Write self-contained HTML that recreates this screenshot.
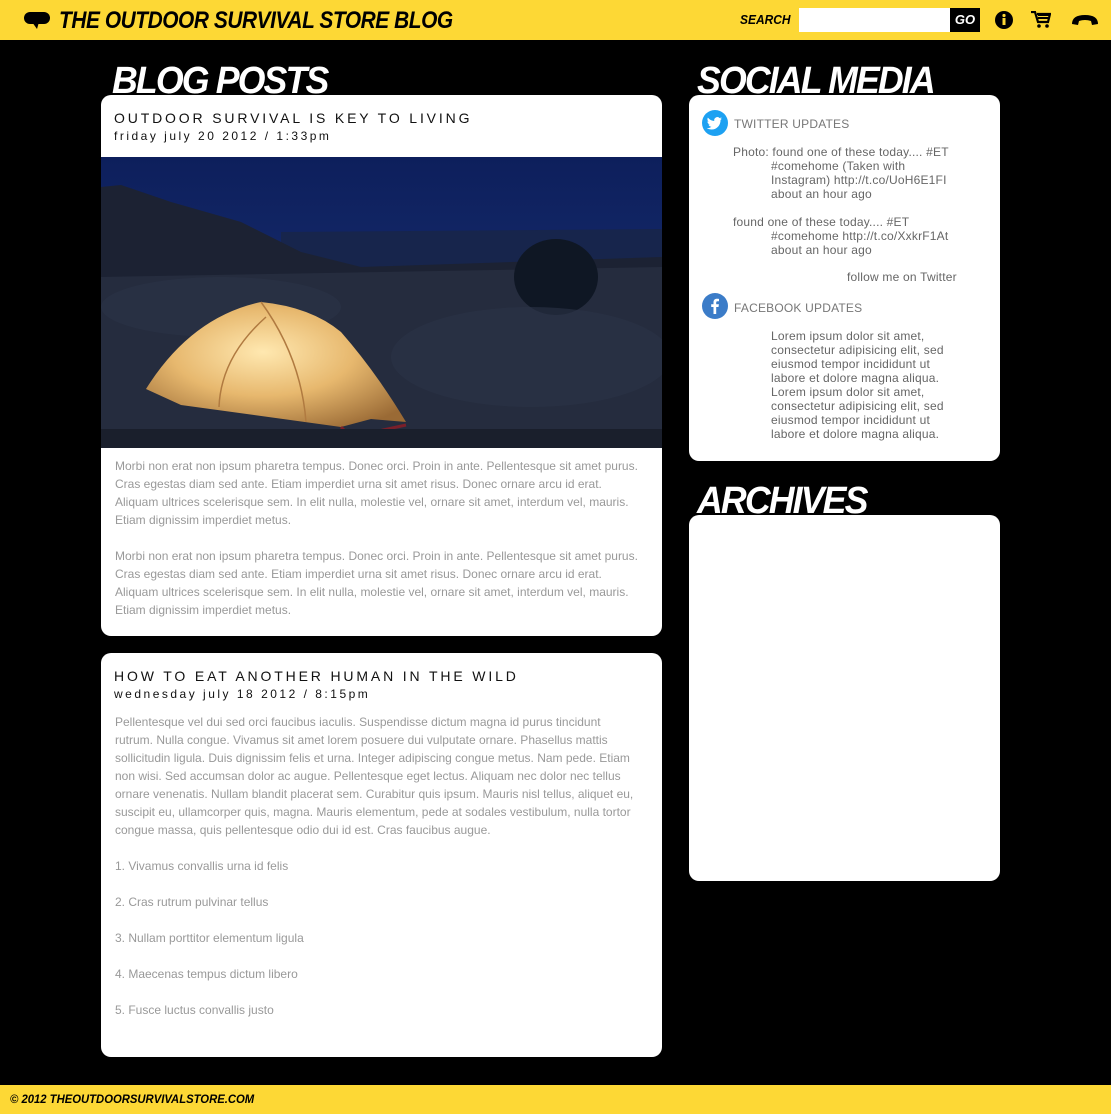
<!DOCTYPE html>
<html><head><meta charset="utf-8"><style>
*{margin:0;padding:0;box-sizing:border-box}
body{width:1111px;height:1114px;background:#000;position:relative;overflow:hidden;font-family:"Liberation Sans",sans-serif}
.hdr{position:absolute;left:0;top:0;width:1111px;height:40px;background:#fdd835}
.ftr{position:absolute;left:0;top:1085px;width:1111px;height:29px;background:#fdd835}
.brand{position:absolute;left:59px;top:7px;font-size:24px;font-weight:bold;font-style:italic;letter-spacing:-0.5px;color:#000;transform:scaleX(0.87);transform-origin:left}
.h{position:absolute;color:#fff;font-weight:bold;font-style:italic;font-size:38px;letter-spacing:-2px;z-index:1;transform:scaleX(0.94);transform-origin:left}
.box{position:absolute;background:#fff;border-radius:10px;z-index:2;overflow:hidden}
.t{position:absolute;left:13px;font-size:14px;letter-spacing:2.85px;color:#111}
.d{position:absolute;left:13px;font-size:12px;letter-spacing:2.5px;color:#111}
.p{position:absolute;left:14px;width:524px;font-size:12px;line-height:18px;color:#999}
.p p{margin-bottom:18px}
.s{position:absolute;font-size:12px;line-height:14px;color:#666;letter-spacing:0.2px}
</style></head><body>
<div class="hdr">
<svg style="position:absolute;left:24px;top:12px" width="26" height="17" viewBox="0 0 26 17"><rect x="0" y="0" width="26" height="12" rx="6" fill="#000"/><path d="M8 10 L13 17 L15 10Z" fill="#000"/></svg>
<div class="brand">THE OUTDOOR SURVIVAL STORE BLOG</div>
<div style="position:absolute;left:740px;top:12px;font-size:13px;font-weight:bold;font-style:italic;transform:scaleX(0.92);transform-origin:left">SEARCH</div>
<div style="position:absolute;left:799px;top:8px;width:152px;height:24px;background:#fff"></div>
<div style="position:absolute;left:950px;top:8px;width:30px;height:24px;background:#000;color:#fff;font-size:13px;font-weight:bold;font-style:italic;text-align:center;line-height:24px">GO</div>
<svg style="position:absolute;left:995px;top:11px" width="18" height="18" viewBox="0 0 18 18"><circle cx="9" cy="9" r="9" fill="#000"/><rect x="7.5" y="7" width="3" height="7" fill="#fdd835"/><circle cx="9" cy="4.5" r="1.6" fill="#fdd835"/></svg>
<svg style="position:absolute;left:1031px;top:11px" width="20" height="18" viewBox="0 0 20 18"><path d="M0 1h4l3 10h10l2-8H6" fill="none" stroke="#000" stroke-width="2.2"/><path d="M7 4h11M7 7h10" stroke="#000" stroke-width="2"/><circle cx="8" cy="15" r="1.8"/><circle cx="16" cy="15" r="1.8"/></svg>
<svg style="position:absolute;left:1071px;top:13px" width="28" height="14" viewBox="0 0 28 14"><path d="M1 11 Q1 2 14 2 Q27 2 27 11 L21 12 L20 8 Q14 6 8 8 L7 12Z" fill="#000"/></svg>
</div>

<div class="h" style="left:112px;top:60px">BLOG POSTS</div>
<div class="h" style="left:697px;top:60px">SOCIAL MEDIA</div>
<div class="h" style="left:697px;top:480px">ARCHIVES</div>

<div class="box" style="left:101px;top:95px;width:561px;height:541px">
<div class="t" style="top:15px">OUTDOOR SURVIVAL IS KEY TO LIVING</div>
<div class="d" style="top:34px">friday july 20 2012 / 1:33pm</div>
<svg style="position:absolute;left:0;top:62px" width="561" height="291" viewBox="0 0 561 291">
<defs><linearGradient id="sk" x1="0" y1="0" x2="0" y2="1"><stop offset="0" stop-color="#0d1f5c"/><stop offset="1" stop-color="#1d3578"/></linearGradient>
<radialGradient id="tg" cx="0.45" cy="0.4" r="0.7"><stop offset="0" stop-color="#ffe8b0"/><stop offset="0.5" stop-color="#e7b86e"/><stop offset="1" stop-color="#9a6a35"/></radialGradient></defs>
<rect width="561" height="291" fill="url(#sk)"/>
<path d="M180 75 L561 72 L561 110 L180 110Z" fill="#17254c"/>
<path d="M0 30 L20 28 L70 45 L140 65 L200 95 L260 110 L561 100 L561 291 L0 291Z" fill="#1c2233"/>
<path d="M0 120 L561 110 L561 291 L0 291Z" fill="#252c3e"/>
<ellipse cx="455" cy="120" rx="42" ry="38" fill="#0f1724"/>
<ellipse cx="120" cy="150" rx="120" ry="30" fill="#2a3246" opacity="0.7"/>
<ellipse cx="430" cy="200" rx="140" ry="50" fill="#2c3448" opacity="0.6"/>
<path d="M45 232 Q90 160 160 145 Q210 150 240 175 Q275 215 305 265 L270 262 L240 270 L80 248Z" fill="url(#tg)"/>
<path d="M240 270 L250 280 L305 268" fill="none" stroke="#7a1f2a" stroke-width="3"/>
<path d="M160 145 Q200 200 205 265 M165 160 Q120 200 118 250" fill="none" stroke="#b07a40" stroke-width="1.5"/>
<rect y="272" width="561" height="19" fill="#1a1f2c"/>
</svg>
<div class="p" style="top:362px"><p>Morbi non erat non ipsum pharetra tempus. Donec orci. Proin in ante. Pellentesque sit amet purus. Cras egestas diam sed ante. Etiam imperdiet urna sit amet risus. Donec ornare arcu id erat. Aliquam ultrices scelerisque sem. In elit nulla, molestie vel, ornare sit amet, interdum vel, mauris. Etiam dignissim imperdiet metus.</p><p>Morbi non erat non ipsum pharetra tempus. Donec orci. Proin in ante. Pellentesque sit amet purus. Cras egestas diam sed ante. Etiam imperdiet urna sit amet risus. Donec ornare arcu id erat. Aliquam ultrices scelerisque sem. In elit nulla, molestie vel, ornare sit amet, interdum vel, mauris. Etiam dignissim imperdiet metus.</p></div>
</div>

<div class="box" style="left:101px;top:653px;width:561px;height:404px">
<div class="t" style="top:15px">HOW TO EAT ANOTHER HUMAN IN THE WILD</div>
<div class="d" style="top:34px">wednesday july 18 2012 / 8:15pm</div>
<div class="p" style="top:60px"><p>Pellentesque vel dui sed orci faucibus iaculis. Suspendisse dictum magna id purus tincidunt rutrum. Nulla congue. Vivamus sit amet lorem posuere dui vulputate ornare. Phasellus mattis sollicitudin ligula. Duis dignissim felis et urna. Integer adipiscing congue metus. Nam pede. Etiam non wisi. Sed accumsan dolor ac augue. Pellentesque eget lectus. Aliquam nec dolor nec tellus ornare venenatis. Nullam blandit placerat sem. Curabitur quis ipsum. Mauris nisl tellus, aliquet eu, suscipit eu, ullamcorper quis, magna. Mauris elementum, pede at sodales vestibulum, nulla tortor congue massa, quis pellentesque odio dui id est. Cras faucibus augue.</p>
<p>1. Vivamus convallis urna id felis</p><p>2. Cras rutrum pulvinar tellus</p><p>3. Nullam porttitor elementum ligula</p><p>4. Maecenas tempus dictum libero</p><p>5. Fusce luctus convallis justo</p></div>
</div>

<div class="box" style="left:689px;top:95px;width:311px;height:366px">
<svg style="position:absolute;left:13px;top:15px" width="26" height="26" viewBox="0 0 26 26"><circle cx="13" cy="13" r="13" fill="#1da1f2"/><path d="M20 8.5c-.6.3-1.2.4-1.8.5.7-.4 1.1-1 1.4-1.7-.6.4-1.3.6-2 .8a3.1 3.1 0 0 0-5.3 2.8c-2.6-.1-4.9-1.4-6.4-3.3-.9 1.5-.4 3.3.9 4.2-.5 0-1-.2-1.4-.4 0 1.5 1.1 2.8 2.5 3.1-.5.1-.9.2-1.4.1.4 1.200 1.6 2.1 2.9 2.2-1.3 1-2.9 1.5-4.6 1.3 1.4.9 3.1 1.4 4.8 1.4 5.8 0 9.1-5 8.9-9.5.6-.4 1.1-1 1.5-1.5z" fill="#fff"/></svg>
<div class="s" style="left:45px;top:22px;color:#777">TWITTER UPDATES</div>
<div class="s" style="left:44px;top:50px">Photo: found one of these today.... #ET</div>
<div class="s" style="left:82px;top:64px;width:195px">#comehome (Taken with Instagram) http://t.co/UoH6E1FI<br>about an hour ago</div>
<div class="s" style="left:44px;top:120px">found one of these today.... #ET</div>
<div class="s" style="left:82px;top:134px;width:215px">#comehome http://t.co/XxkrF1At<br>about an hour ago</div>
<div class="s" style="left:158px;top:175px">follow me on Twitter</div>
<svg style="position:absolute;left:13px;top:198px" width="26" height="26" viewBox="0 0 26 26"><circle cx="13" cy="13" r="13" fill="#3b7cc8"/><path d="M14.2 21v-7h2.3l.4-2.7h-2.7V9.6c0-.8.3-1.3 1.4-1.3H17V5.9c-.3 0-1.1-.1-2.1-.1-2 0-3.4 1.2-3.4 3.5v2h-2.3V14h2.3v7z" fill="#fff"/></svg>
<div class="s" style="left:45px;top:206px;color:#777">FACEBOOK UPDATES</div>
<div class="s" style="left:82px;top:234px;width:190px">Lorem ipsum dolor sit amet, consectetur adipisicing elit, sed eiusmod tempor incididunt ut labore et dolore magna aliqua.<br>Lorem ipsum dolor sit amet, consectetur adipisicing elit, sed eiusmod tempor incididunt ut labore et dolore magna aliqua.</div>
</div>

<div class="box" style="left:689px;top:515px;width:311px;height:366px"></div>

<div class="ftr"><div style="position:absolute;left:10px;top:7px;font-size:12px;font-weight:bold;font-style:italic;transform:scaleX(0.94);transform-origin:left">© 2012 THEOUTDOORSURVIVALSTORE.COM</div></div>
</body></html>
